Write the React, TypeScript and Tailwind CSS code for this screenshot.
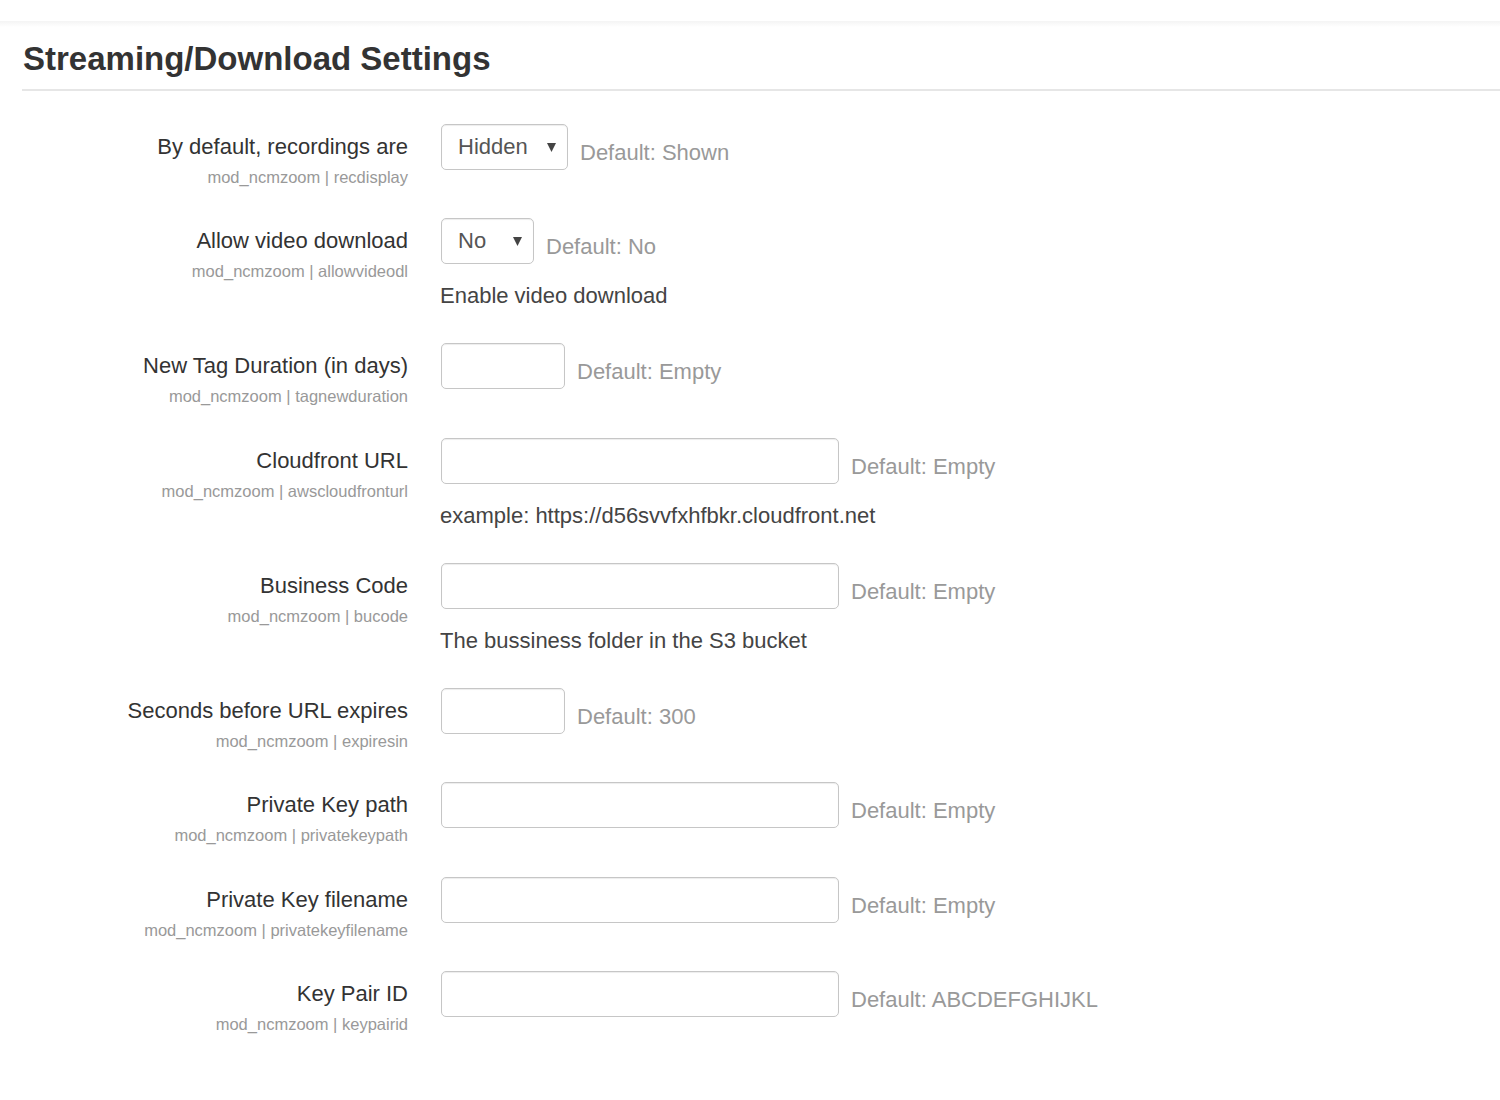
import React from 'react';

type Setting = {
  label: string;
  name: string;
  kind: 'select' | 'small' | 'wide';
  value?: string;
  selectWidth?: string;
  def: string;
  desc?: string;
};

const settings: Setting[] = [
  { label: 'By default, recordings are', name: 'recdisplay', kind: 'select', value: 'Hidden', selectWidth: 'w-[127px]', def: 'Default: Shown' },
  { label: 'Allow video download', name: 'allowvideodl', kind: 'select', value: 'No', selectWidth: 'w-[93px]', def: 'Default: No', desc: 'Enable video download' },
  { label: 'New Tag Duration (in days)', name: 'tagnewduration', kind: 'small', def: 'Default: Empty' },
  { label: 'Cloudfront URL', name: 'awscloudfronturl', kind: 'wide', def: 'Default: Empty', desc: 'example: https://d56svvfxhfbkr.cloudfront.net' },
  { label: 'Business Code', name: 'bucode', kind: 'wide', def: 'Default: Empty', desc: 'The bussiness folder in the S3 bucket' },
  { label: 'Seconds before URL expires', name: 'expiresin', kind: 'small', def: 'Default: 300' },
  { label: 'Private Key path', name: 'privatekeypath', kind: 'wide', def: 'Default: Empty' },
  { label: 'Private Key filename', name: 'privatekeyfilename', kind: 'wide', def: 'Default: Empty' },
  { label: 'Key Pair ID', name: 'keypairid', kind: 'wide', def: 'Default: ABCDEFGHIJKL' },
];

const boxCls =
  'h-[46px] rounded-[5px] border border-[#c6c6c6] bg-white shadow-[inset_0_1px_1px_rgba(0,0,0,0.075)]';

const Control: React.FC<{ s: Setting }> = ({ s }) => {
  if (s.kind === 'select') {
    return (
      <div className={`${boxCls} ${s.selectWidth} flex items-center justify-between pl-4 pr-[11px] text-[22px] text-[#555]`}>
        <span className="leading-[24px]">{s.value}</span>
        <svg width="9" height="10" viewBox="0 0 9 10">
          <path d="M0 1 L9 1 L4.5 10 Z" fill="#444" />
        </svg>
      </div>
    );
  }
  return <input type="text" className={`${boxCls} ${s.kind === 'small' ? 'w-[124px]' : 'w-[398px]'} px-3 text-[22px] outline-none`} />;
};

export default function App() {
  return (
    <div className="min-h-screen bg-white font-['Liberation_Sans',Arial,sans-serif] text-[#333]">
      <div className="h-[21px]" />
      <div className="h-[6px] bg-gradient-to-b from-[#f4f4f4] to-white" />

      <div className="pl-[22px]">
        {/* Heading */}
        <div className="mt-[13px] pb-[12px] border-b-2 border-[#e6e6e6]">
          <h2 className="pl-px text-[33px] font-bold leading-[37px] text-[#333]">Streaming/Download Settings</h2>
        </div>

        {/* Settings rows */}
        <div className="pt-[32.5px]">
          {settings.map((s) => (
            <div key={s.name} className="flex items-start pb-[33.5px]">
              <div className="w-[386px] shrink-0 text-right">
                <div className="text-[22px] leading-[46px] text-[#333]">{s.label}</div>
                <div className="text-[16.5px] leading-[15px] text-[#999]">mod_ncmzoom | {s.name}</div>
              </div>
              <div className="ml-[32px] flex flex-col">
                <div className="flex items-center pl-px">
                  <Control s={s} />
                  <span className="ml-3 pt-3 text-[22px] leading-[24px] text-[#999]">{s.def}</span>
                </div>
                {s.desc && <div className="mt-[18px] text-[22px] leading-[27.5px] text-[#444]">{s.desc}</div>}
              </div>
            </div>
          ))}
        </div>
      </div>
    </div>
  );
}
